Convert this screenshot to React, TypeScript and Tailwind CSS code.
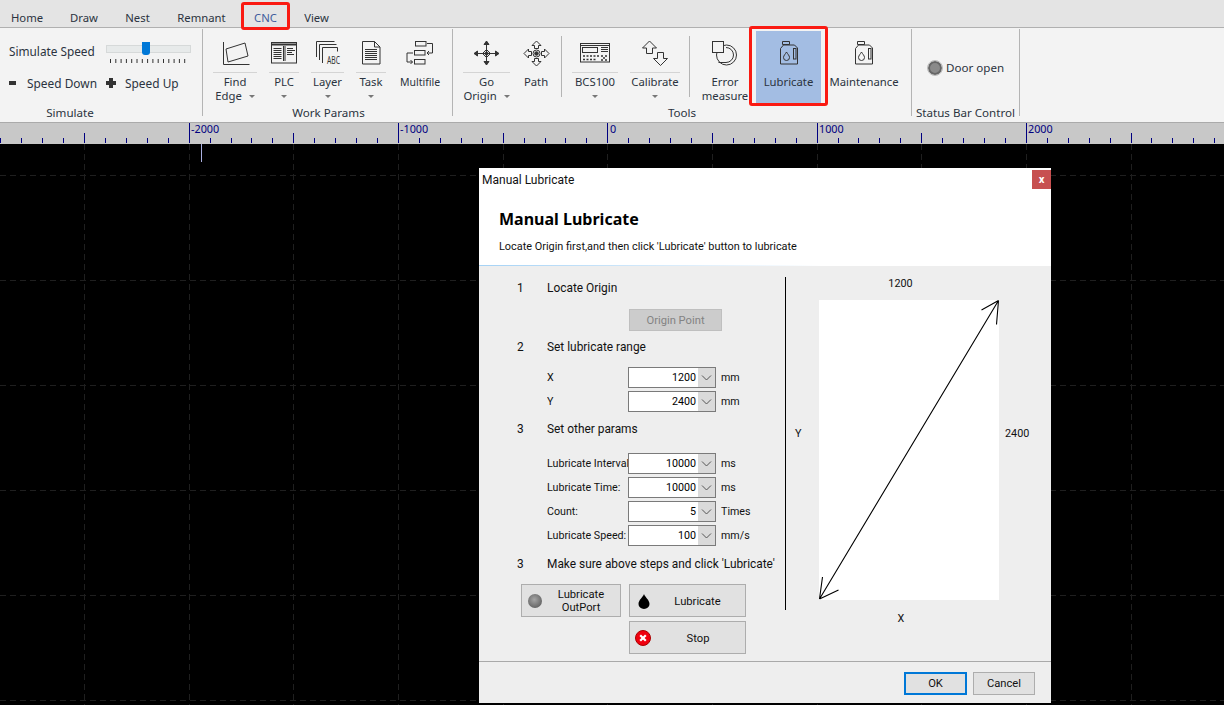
import React from 'react';

const ink = '#333';

function Caret() {
  return <span className="inline-block w-0 h-0 border-x-[3.5px] border-x-transparent border-t-[3.5px] border-t-[#777]" />;
}

function Sep({ className = '' }: { className?: string }) {
  return <div className={`w-px bg-[#b4b4b4] ${className}`} />;
}

interface ToolProps {
  icon: React.ReactNode;
  label: string;
  second?: string;
  menu?: boolean;
  inlineCaret?: boolean;
  className: string;
}

// big ribbon button, the ones with a menu get a line under the icon
function Tool({ icon, label, second, menu, inlineCaret, className }: ToolProps) {
  return (
    <div className={`flex flex-col items-center pt-[12px] shrink-0 text-[11.3px] ${className}`}>
      {icon}
      {menu || inlineCaret ? <div className="w-full h-px bg-[#d4d4d4] mt-[6px]" /> : <div className="h-px mt-[6px]" />}
      <div className="mt-[2px] leading-[14px] text-center whitespace-nowrap">{label}</div>
      {second && (
        <div className="leading-[14px] whitespace-nowrap flex items-center gap-[7px]">
          {second}
          {inlineCaret && <Caret />}
        </div>
      )}
      {menu && !second && (
        <div className="h-[14px] flex items-center">
          <Caret />
        </div>
      )}
    </div>
  );
}

function Svg({ box, children }: { box: string; children: React.ReactNode }) {
  const [, , w, h] = box.split(' ');
  return (
    <svg width={w} height={h} viewBox={box} fill="none" stroke={ink} strokeWidth="1" className="block shrink-0 overflow-visible">
      {children}
    </svg>
  );
}

const FindEdgeIcon = () => (
  <Svg box="218 40 32 26">
    <path d="M222.5 42v22.5h26" />
    <path d="M225 49l19-6 3 13-20 6z" />
  </Svg>
);

const PlcIcon = () => (
  <Svg box="269 40 30 26">
    <rect x="271.5" y="42.5" width="25" height="20.5" />
    <path d="M272 44.5h24" strokeWidth="2" />
    <path d="M283.5 46v15M285 46v15M273.5 48.5h8M273.5 50.5h8M273.5 52.5h8M273.5 54.5h8M273.5 56.5h8M273.5 58.5h8M287 48.5h6M287 50.5h8M287 52.5h5M287 54.5h7" />
  </Svg>
);

const LayerIcon = () => (
  <Svg box="313 40 28 26">
    <path d="M315.5 57V41.5h18M318.5 60V44.5h17M321.5 63V47.5h15v4" />
    <text x="326" y="64" fontSize="10" fill={ink} stroke="none" textLength="13" lengthAdjust="spacingAndGlyphs">ABC</text>
  </Svg>
);

const TaskIcon = () => (
  <Svg box="358 40 26 26">
    <path d="M362.5 41.5h12l5.5 5.5v17h-17.500z" />
    <path d="M374.500 41.500v5.500h5.500" />
    <path d="M365 49.500h12M365 51.500h12M365 53.500h12M365 55.500h12M365 57.500h12M365 59.500h12" />
  </Svg>
);

const MultifileIcon = () => (
  <Svg box="404 40 32 26">
    <rect x="415.500" y="41.500" width="10.500" height="4.500" />
    <rect x="414.500" y="50.500" width="10.500" height="4.500" />
    <rect x="414.500" y="59.500" width="10.500" height="4.500" />
    <path d="M427 43.500h5.500v9.500h-5.500M429 51l-2 2 2 2M413 53h-6v9h5.500M410.500 60l2 2-2 2" />
  </Svg>
);

const GoOriginIcon = () => (
  <Svg box="472 40 28 26">
    <path d="M485.500 41.500v23M473.500 53.500h24" />
    <path d="M485.500 41l-2.500 3.500h5zM485.500 65l-2.500-3.500h5zM473 53.500l3.500-2.500v5zM498 53.500l-3.500-2.500v5z" fill={ink} />
    <path d="M485.500 49.500l4 4-4 4-4-4z" />
    <circle cx="485.500" cy="53.500" r="1.500" fill={ink} />
  </Svg>
);

const PathIcon = () => (
  <Svg box="523 40 27 26">
    <path d="M536.500 41l4.500 4.500h-2.500v3h-4v-3h-2.500zM536.500 66l4.500-4.500h-2.500v-3h-4v3h-2.500z" />
    <path d="M524 53.500l4.500-4.500v2.500h3v4h-3v2.500zM549 53.500l-4.500-4.500v2.500h-3v4h3v2.500z" />
    <circle cx="536.500" cy="53.500" r="3.500" />
    <circle cx="536.500" cy="53.500" r="1.800" fill={ink} />
  </Svg>
);

const BcsIcon = () => (
  <Svg box="579 40 33 26">
    <rect x="580.500" y="43.500" width="29" height="18.500" />
    <rect x="582.500" y="47.500" width="15" height="5" />
    <path d="M581 45.500h28" />
    <path d="M601 47.500h7M601 49.500h7M601 51.500h7" />
    <path d="M583 56h2M586.500 56h2M590 56h2M593.500 56h2M597 56h2M583 59.500h2M586.500 59.500h2M590 59.500h2M593.500 59.500h2M601 56h2M605 56h2M603 58h2M601 60h2M605 60h2" strokeWidth="1.500" />
  </Svg>
);

const CalibrateIcon = () => (
  <Svg box="641 40 28 26">
    <path d="M649.500 41l-7 7h4v5.500h6V48h4z" />
    <path d="M660.500 65.500l7-7h-4v-6h-6v6h-4z" />
  </Svg>
);

const ErrorIcon = () => (
  <Svg box="712 40 28 26">
    <circle cx="727.500" cy="55" r="10" />
    <path d="M727 47.500a7.500 7.500 0 0 1 0 15h-7.500" />
    <rect x="713.500" y="41.500" width="11" height="11" fill="#f3f3f3" />
  </Svg>
);

function BottleIcon({ box }: { box: string }) {
  return (
    <Svg box={box}>
      <path d="M782.500 41.500h7v3h-7z" />
      <path d="M780.500 64V48.500l3-3.500h11l3 3v16z" />
      <rect x="793.500" y="48.500" width="2.500" height="10.500" />
      <path d="M786.500 52c-1 2-3 3.500-3 5.500a3 3 0 0 0 6 0c0-2-2-3.500-3-5.500z" />
    </Svg>
  );
}

function Group({ title, className, titleClass = '', children }: { title: string; className: string; titleClass?: string; children?: React.ReactNode }) {
  return (
    <div className={`flex flex-col shrink-0 ${className}`}>
      <div className="h-[77px] flex">{children}</div>
      <div className={`h-[17px] leading-[16px] text-center whitespace-nowrap ${titleClass}`}>{title}</div>
    </div>
  );
}

function Ribbon() {
  return (
    <div className="flex h-[95px] bg-[#f3f3f3] border-b border-[#aaaaaa] text-[#2b3340] shrink-0">
      <Group title="Simulate" className="w-[202px]" titleClass="pr-[62px]">
        <div className="w-full">
          <div className="flex items-start pl-[9px] pt-[15px]">
            <span className="w-[97px] leading-[15px] mt-px text-[11.8px]">Simulate Speed</span>
            <div className="relative w-[85px]">
              <div className="h-[8px] mt-[2px] bg-[#e7eaea] border border-[#d6d9d9]" />
              <div className="absolute left-[36px] -top-[1px] w-[8px] h-[13px] bg-[#0078d7] rounded-b-[3px]" />
              <svg width="85" height="6" className="block mt-[5px]" stroke="#333">
                {Array.from({ length: 15 }).map((_, i) => (
                  <path key={i} d={`M${4.5 + i * 5.3} 1v4`} />
                ))}
              </svg>
            </div>
          </div>
          <div className="flex items-center pl-[9px] mt-[11px] leading-[16px] text-[11.9px]">
            <span className="w-[7px] h-[4px] bg-[#333]" />
            <span className="ml-[11px] w-[79px] whitespace-nowrap">Speed Down</span>
            <svg width="10" height="10" viewBox="0 0 10 10" fill="#333" className="block">
              <path d="M3 0h4v3h3v4H7v3H3V7H0V3h3z" />
            </svg>
            <span className="ml-[9px]">Speed Up</span>
          </div>
        </div>
      </Group>
      <Sep className="h-[87px] mt-px" />
      <Group title="Work Params" className="w-[249px]" titleClass="pl-[2px]">
        <Tool icon={<FindEdgeIcon />} label="Find" second="Edge" inlineCaret className="w-[44px] ml-[10px]" />
        <Tool icon={<PlcIcon />} label="PLC" menu className="w-[30px] ml-[12px]" />
        <Tool icon={<LayerIcon />} label="Layer" menu className="w-[33px] ml-[12px]" />
        <Tool icon={<TaskIcon />} label="Task" menu className="w-[30px] ml-[12px]" />
        <Tool icon={<MultifileIcon />} label="Multifile" className="w-[44px] ml-[12px] !text-[10.5px]" />
      </Group>
      <Sep className="h-[87px] mt-px" />
      <Group title="Tools" className="w-[458px]">
        <Tool icon={<GoOriginIcon />} label="Go" second="Origin" inlineCaret className="w-[47px] ml-[10px]" />
        <Tool icon={<PathIcon />} label="Path" className="w-[30px] ml-[11px]" />
        <Sep className="h-[61px] mt-[8px] ml-[10px]" />
        <Tool icon={<BcsIcon />} label="BCS100" menu className="w-[46px] ml-[10px]" />
        <Tool icon={<CalibrateIcon />} label="Calibrate" menu className="w-[50px] ml-[12px]" />
        <Sep className="h-[61px] mt-[8px] ml-[9px]" />
        <Tool icon={<ErrorIcon />} label="Error" second="measure" className="w-[46px] ml-[12px]" />
        <div className="relative z-10 -mt-[2px] ml-px w-[79px] h-[80px] border-[3px] border-[#fa1a12] rounded-[3px] px-[4px] py-[2px] shrink-0">
          <div className="h-[72px]">
            <Tool
              icon={<BottleIcon box="773 40 32 26" />}
              label="Lubricate"
              className="w-[65px] h-[72px] bg-[#a3bde3] !pt-[9px]"
            />
          </div>
        </div>
        <Tool icon={<BottleIcon box="773 40 32 26" />} label="Maintenance" className="w-[70px] ml-px" />
      </Group>
      <Sep className="h-[87px] mt-px" />
      <Group title="Status Bar Control" className="w-[107px]">
        <div className="flex items-center pl-[16px] h-[77px] pt-[2px]">
          <span className="w-[14px] h-[14px] rounded-full border-2 border-[#666] bg-[#8a8a8a] outline outline-[#bbb]" />
          <span className="ml-[4px] whitespace-nowrap">Door open</span>
        </div>
      </Group>
      <Sep className="h-[87px] mt-px" />
    </div>
  );
}

const tickX = (n: number) => Math.floor(189.2 + n * 20.93) + 0.5;

function Ruler() {
  const ticks = Array.from({ length: 60 }).map((_, i) => i - 9);
  const labels = [
    [191, '-2000'],
    [400, '-1000'],
    [610, '0'],
    [819, '1000'],
    [1028, '2000'],
  ] as const;
  return (
    <svg width="1224" height="21" className="block bg-[#c8c8c8] shrink-0 overflow-visible" stroke="#000080">
      {ticks.map((n) => {
        const top = n % 10 === 0 ? 0 : n % 5 === 0 ? 10 : 15;
        return <path key={n} d={`M${tickX(n)} ${top}V20`} />;
      })}
      {labels.map(([x, t]) => (
        <text key={t} x={x} y="9.500" fontSize="10.800" fill="#000080" stroke="none">
          {t}
        </text>
      ))}
    </svg>
  );
}

function Grid() {
  const ns = [-5, 0, 5, 10, 15, 20, 25, 30, 35, 40, 45];
  const ys = [31, 136, 241, 346, 451, 556];
  return (
    <svg width="1224" height="561" className="block" stroke="#1f1f1f" strokeDasharray="6 4">
      {ns.map((n) => (
        <path key={n} d={`M${tickX(n)} 0V561`} />
      ))}
      {ys.map((y) => (
        <path key={y} d={`M0 ${y + 0.5}H1224`} />
      ))}
      <path d="M201.500 0V18" stroke="#aab0e0" strokeDasharray="none" />
    </svg>
  );
}

function Combo({ value }: { value: string }) {
  return (
    <div className="flex w-[88px] h-[21px] border border-[#7a7a7a] bg-white shrink-0">
      <div className="flex-1 text-right pr-[2px] leading-[19px] text-black">{value}</div>
      <div className="w-[17px] bg-[#dadada] flex items-center justify-center">
        <svg width="11" height="6" viewBox="0 0 11 6" fill="none" stroke="#555">
          <path d="M1 .5l4.500 4.500L10 .5" />
        </svg>
      </div>
    </div>
  );
}

function Step({ n, text, className }: { n: string; text: string; className: string }) {
  return (
    <div className={`flex h-[20px] items-center pt-[2px] text-[11.9px] ${className}`}>
      <span className="w-[30px] shrink-0">{n}</span>
      <span className="whitespace-nowrap">{text}</span>
    </div>
  );
}

function Param({ label, value, unit, className = 'mt-[3px]' }: { label: string; value: string; unit: string; className?: string }) {
  return (
    <div className={`flex h-[21px] pl-[30px] leading-[21px] text-[10.7px] ${className}`}>
      <span className="w-[81px] overflow-hidden whitespace-nowrap shrink-0">{label}</span>
      <Combo value={value} />
      <span className="ml-[5px] whitespace-nowrap">{unit}</span>
    </div>
  );
}

function Btn({ className, children }: { className: string; children: React.ReactNode }) {
  return (
    <div className={`flex items-center bg-[#e1e1e1] border border-[#adadad] h-[33px] shrink-0 ${className}`}>
      {children}
    </div>
  );
}

function Dialog() {
  return (
    <div className="absolute left-[479px] top-[24px] w-[572px] h-[535px] flex flex-col bg-[#eeeeee] text-[#111] text-[11.2px] font-['Roboto',sans-serif]">
      <div className="h-[97px] bg-white relative">
        <div className="pl-[3px] pt-[5px] leading-[15px] text-[12px]">Manual Lubricate</div>
        <div className="absolute right-0 top-[2px] w-[19px] h-[19px] bg-[#c75050] text-white flex items-center justify-center font-bold leading-none">
          x
        </div>
        <div className="pl-[20px] mt-[20px] text-[16px] leading-[22px] font-bold text-black font-['Noto_Sans',sans-serif]">
          Manual Lubricate
        </div>
        <div className="pl-[20px] mt-[9px] leading-[16px] whitespace-nowrap text-[10.9px]">
          Locate Origin first,and then click 'Lubricate' button to lubricate
        </div>
      </div>
      <div className="h-px bg-gradient-to-r from-[#a5d2f5] to-white to-60%" />
      <div className="flex h-[395px]">
        <div className="w-[306px] pl-[38px] shrink-0">
          <Step n="1" text="Locate Origin" className="mt-[12px]" />
          <div className="ml-[112px] mt-[11px] w-[93px] h-[22px] bg-[#cccccc] border border-[#bfbfbf] text-[#838383] text-center leading-[21px]">
            Origin Point
          </div>
          <Step n="2" text="Set lubricate range" className="mt-[6px]" />
          <Param label="X" value="1200" unit="mm" className="mt-[10px]" />
          <Param label="Y" value="2400" unit="mm" />
          <Step n="3" text="Set other params" className="mt-[7px]" />
          <Param label="Lubricate Interval:" value="10000" unit="ms" className="mt-[14px]" />
          <Param label="Lubricate Time:" value="10000" unit="ms" />
          <Param label="Count:" value="5" unit="Times" />
          <Param label="Lubricate Speed:" value="100" unit="mm/s" />
          <Step n="3" text="Make sure above steps and click 'Lubricate'" className="mt-[8px]" />
          <div className="flex mt-[10px] ml-[4px]">
            <Btn className="w-[100px] pl-[6px]">
              <span className="w-[14px] h-[14px] rounded-full bg-[radial-gradient(circle_at_45%_40%,#a5a5a5,#4f4f4f)] shrink-0" />
              <span className="flex-1 text-center leading-[13px]">
                Lubricate
                <br />
                OutPort
              </span>
            </Btn>
            <Btn className="w-[117px] ml-[8px] pl-[8px]">
              <svg width="12" height="16" viewBox="0 0 12 16" className="block shrink-0">
                <path d="M6 1c-1 3-5.500 6-5.500 10a5.500 5 0 0 0 11 0C11.500 7 7 4 6 1z" fill="#000" />
              </svg>
              <span className="flex-1 text-center pt-[3px]">Lubricate</span>
            </Btn>
          </div>
          <Btn className="w-[117px] ml-[112px] mt-[4px] pl-[5px]">
            <svg width="16" height="16" viewBox="0 0 16 16" className="block shrink-0">
              <circle cx="8" cy="8" r="7.500" fill="#f0000f" stroke="#a00" />
              <path d="M5.200 5.200l5.600 5.600M10.800 5.200l-5.600 5.600" stroke="#fff" strokeWidth="2.200" />
            </svg>
            <span className="flex-1 text-center pt-[3px]">Stop</span>
          </Btn>
        </div>
        <div className="w-px h-[333px] mt-[11px] bg-black shrink-0" />
        <div className="flex-1 flex flex-col pt-[8px] text-[10.8px]">
          <div className="h-[20px] leading-[20px] ml-[33px] w-[163px] text-center">1200</div>
          <div className="flex items-start mt-[6px]">
            <span className="w-[33px] pl-[9px] shrink-0 mt-[126px] leading-[16px]">Y</span>
            <div className="w-[180px] h-[300px] bg-white shrink-0">
              <svg width="180" height="300" viewBox="0 0 180 300" fill="none" stroke="#000" strokeWidth="1.100" className="block">
                <path d="M179.500.500L.500 299M179.500.500l-17 9.500M179.500.500l-2 24M.500 299l3-22M.500 299l19-9" />
              </svg>
            </div>
            <span className="ml-[6px] whitespace-nowrap mt-[126px] leading-[16px]">2400</span>
          </div>
          <div className="ml-[33px] w-[164px] mt-[9px] h-[20px] leading-[20px] text-center">X</div>
        </div>
      </div>
      <div className="h-px bg-[#a9a9a9]" />
      <div className="flex-1 flex justify-end items-start pt-[10px] pr-[16px] gap-[6px]">
        <div className="w-[63px] h-[23px] border-2 border-[#0078d7] bg-[#e1e1e1] text-center leading-[20px]">OK</div>
        <div className="w-[62px] h-[23px] border border-[#adadad] bg-[#e1e1e1] text-center leading-[22px]">Cancel</div>
      </div>
    </div>
  );
}

export default function App() {
  const tabs = [
    ['Home', 'w-[54px]'],
    ['Draw', 'w-[60px]'],
    ['Nest', 'w-[47px]'],
    ['Remnant', 'w-[81px]'],
  ];
  return (
    <div className="w-[1224px] h-[705px] overflow-hidden flex flex-col bg-black text-[11.6px] font-['Noto_Sans','DejaVu_Sans',sans-serif]">
      <div className="flex h-[28px] bg-[#e4e4e4] border-b border-[#b0b0b0] text-[#2b3340] shrink-0 text-[11.3px]">
        {tabs.map(([t, w]) => (
          <div key={t} className={`${w} text-center leading-[35px] h-[27px]`}>
            {t}
          </div>
        ))}
        <div className="relative z-10 w-[49px] h-[28px] mt-[2px] -ml-px border-[3px] border-[#fa1a12] rounded-[3px] text-center text-[#3f5c9c] leading-[25px]">
          CNC
        </div>
        <div className="w-[53px] text-center leading-[35px] h-[27px]">View</div>
      </div>
      <Ribbon />
      <Ruler />
      <div className="relative flex-1">
        <Grid />
        <Dialog />
      </div>
    </div>
  );
}
